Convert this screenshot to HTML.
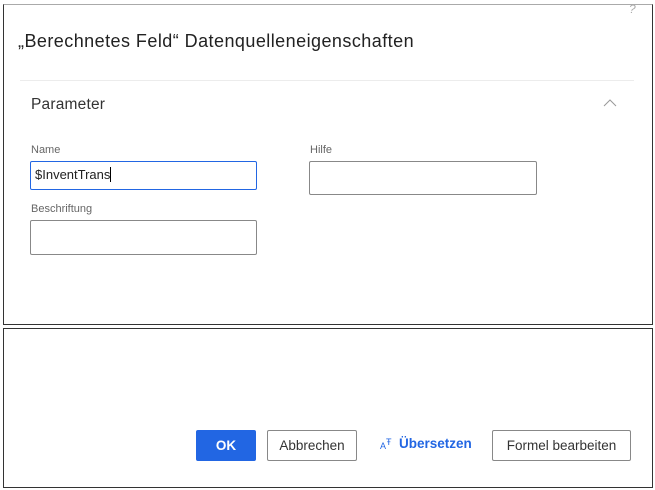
<!DOCTYPE html>
<html><head><meta charset="utf-8"><style>
*{box-sizing:border-box;margin:0;padding:0}
body{width:655px;height:490px;background:#fff;font-family:"Liberation Sans",sans-serif;position:relative;overflow:hidden;color:#222}
.abs{position:absolute}
.panel{position:absolute;border:1px solid #333;background:#fff}
.lbl{position:absolute;font-size:11px;color:#666}
.inp{position:absolute;border:1px solid #888;border-radius:2px;background:#fff}
.btn{position:absolute;border:1px solid #888;border-radius:2px;font-size:13.5px;display:flex;align-items:center;justify-content:center;color:#333;background:#fff}
</style></head><body>
<div class="panel" style="left:3px;top:4px;width:650px;height:321px;border-top-color:#aaa"></div>
<div class="abs" style="left:629px;top:2px;font-size:12px;color:#aaa;font-style:italic">?</div>
<div class="abs" style="left:18px;top:31px;font-size:18px;color:#222;letter-spacing:0.45px">„Berechnetes Feld“ Datenquelleneigenschaften</div>
<div class="abs" style="left:20px;top:80px;width:614px;height:1px;background:#ececec"></div>
<div class="abs" style="left:31px;top:96px;font-size:15.5px;color:#333;letter-spacing:0.2px">Parameter</div>
<svg class="abs" style="left:603px;top:98px" width="14" height="10"><path d="M1 8 L7 2 L13 8" fill="none" stroke="#999" stroke-width="1"/></svg>
<div class="lbl" style="left:31px;top:144px">Name</div>
<div class="inp" style="left:30px;top:161px;width:227px;height:29px;border-color:#2266e3"></div>
<div class="abs" style="left:35px;top:167px;font-size:13px;color:#222">$InventTrans<span style="display:inline-block;width:1px;height:15px;background:#000;vertical-align:-3px"></span></div>
<div class="lbl" style="left:310px;top:144px">Hilfe</div>
<div class="inp" style="left:309px;top:161px;width:228px;height:34px"></div>
<div class="lbl" style="left:31px;top:203px">Beschriftung</div>
<div class="inp" style="left:30px;top:220px;width:227px;height:35px"></div>

<div class="panel" style="left:3px;top:328px;width:650px;height:160px"></div>
<div class="btn" style="left:196px;top:430px;width:60px;height:31px;background:#2266e3;border-color:#2266e3;color:#fff;font-weight:bold">OK</div>
<div class="btn" style="left:267px;top:430px;width:90px;height:31px">Abbrechen</div>
<div class="abs" style="left:380px;top:437px;font-size:9px;color:#2266e3">A<sup style="font-size:9px">Ŧ</sup></div>
<div class="abs" style="left:399px;top:436px;font-size:13.5px;color:#2266e3;font-weight:bold">Übersetzen</div>
<div class="btn" style="left:492px;top:430px;width:139px;height:31px">Formel bearbeiten</div>
</body></html>
